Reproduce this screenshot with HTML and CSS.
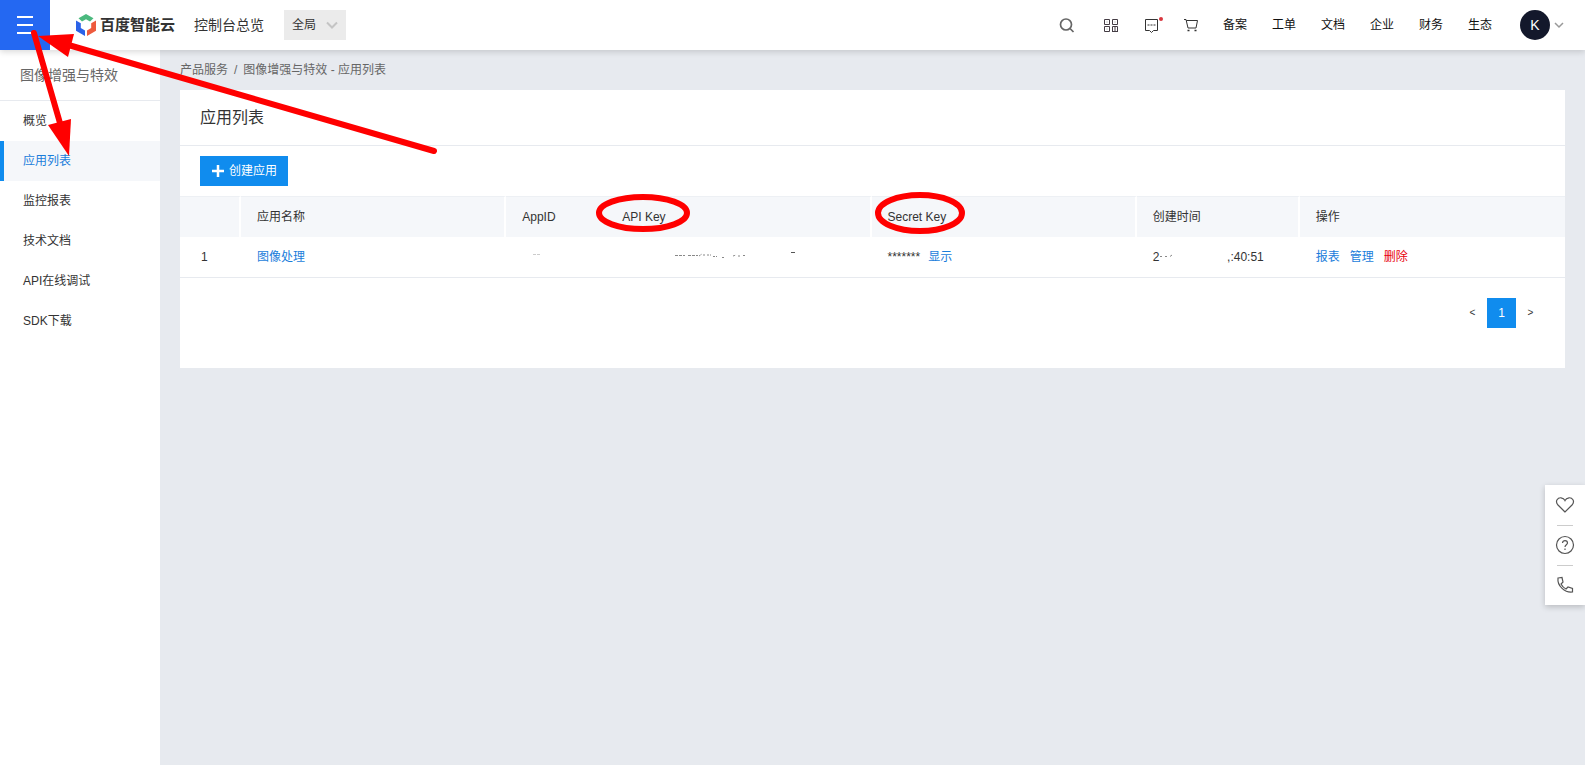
FILE: index.html
```html
<!DOCTYPE html>
<html lang="zh-CN">
<head>
    <meta charset="UTF-8">
    <title>应用列表</title>
    <link rel="stylesheet" href="styles.css">
</head>
<body>
    <header class="header">
        <button class="menu-btn" aria-label="菜单"><span></span><span></span><span></span></button>
        <a href="#" class="logo">
            <svg width="20" height="22" viewBox="0 0 20 22">
                <path d="M10 0L17.500 4.200L14 7.500L10 5.200L6 7.500L2.500 4.200Z" fill="#4bb97e"/>
                <path d="M0 6.500L4.800 9.200V14L9 16.500V22L0 16.800Z" fill="#2b62e8"/>
                <path d="M20 6.500L15.200 9.200V14L11 16.500V22L20 16.800Z" fill="#ee5a3d"/>
            </svg>
            <span>百度智能云</span>
        </a>
        <a href="#" class="console-link">控制台总览</a>
        <button class="region-btn">全局
            <svg width="12" height="8" viewBox="0 0 12 8"><path d="M1 1.500L6 6.500L11 1.500" fill="none" stroke="#c4c4c4" stroke-width="2"/></svg>
        </button>
        <nav class="tools">
            <a href="#" aria-label="搜索" class="search">
                <svg width="16" height="16" viewBox="0 0 16 16" fill="none" stroke="#666" stroke-width="1.700"><circle cx="7" cy="7.500" r="5.500"/><path d="M11 11.500L14.500 15"/></svg>
            </a>
            <a href="#" aria-label="产品">
                <svg width="16" height="16" viewBox="0 0 16 16" fill="none" stroke="#443c44"><path d="M1.500 2.500H6.500V7.500H1.500ZM9.500 2.500H14.500V7.500H9.500ZM1.500 9.500H6.500V14.500H1.500ZM9.500 15V9.500H14.500V15M12 9.500V15M9.500 14.500H14.500"/><path d="M3.500 5H4.500M11.500 5H12.500M3.500 12H4.500" stroke="#999"/></svg>
            </a>
            <a href="#" aria-label="消息" class="message">
                <svg width="16" height="16" viewBox="0 0 16 16" fill="none" stroke="#333"><path d="M2.500 2.500H14.500V13.500H10.500L8.500 15.500L6.500 13.500H2.500Z"/><path d="M4.500 8H6.500M7.500 8H9.500M10.500 8H12.500"/></svg>
            </a>
            <a href="#" aria-label="购物车">
                <svg width="16" height="16" viewBox="0 0 16 16" fill="none" stroke="#333"><path d="M1 2.500H3L5 11H13L14.500 3.500H3.300"/><path d="M4.500 13.500H6.500M11.500 13.500H13.500" stroke-width="1.500"/></svg>
            </a>
        </nav>
        <nav class="links">
            <a href="#">备案</a>
            <a href="#">工单</a>
            <a href="#">文档</a>
            <a href="#">企业</a>
            <a href="#">财务</a>
            <a href="#">生态</a>
        </nav>
        <button class="user">
            <span class="avatar">K</span>
            <svg width="10" height="8" viewBox="0 0 10 8"><path d="M1 2L5 6L9 2" fill="none" stroke="#999" stroke-width="1.500"/></svg>
        </button>
    </header>

    <div class="layout">
        <aside class="sidebar">
            <h2>图像增强与特效</h2>
            <a href="#">概览</a>
            <a href="#" class="active">应用列表</a>
            <a href="#">监控报表</a>
            <a href="#">技术文档</a>
            <a href="#">API在线调试</a>
            <a href="#">SDK下载</a>
        </aside>

        <main class="main">
            <div class="breadcrumb"><a href="#">产品服务</a><span>/</span>图像增强与特效 - 应用列表</div>
            <section class="card">
                <h1>应用列表</h1>
                <div class="toolbar">
                    <button class="create-btn">
                        <svg width="12" height="12" viewBox="0 0 12 12"><path d="M6 0V12M0 6H12" stroke="#fff" stroke-width="2.500"/></svg>
                        创建应用
                    </button>
                </div>
                <table>
                    <colgroup>
                        <col class="col-index">
                        <col>
                        <col class="col-appid">
                        <col>
                        <col>
                        <col class="col-time">
                        <col>
                    </colgroup>
                    <thead>
                        <tr>
                            <th></th>
                            <th>应用名称</th>
                            <th class="joined">AppID</th>
                            <th>API Key</th>
                            <th>Secret Key</th>
                            <th>创建时间</th>
                            <th>操作</th>
                        </tr>
                    </thead>
                    <tbody>
                        <tr>
                            <td>1</td>
                            <td><a href="#">图像处理</a></td>
                            <td><svg class="trace" width="30" height="12" viewBox="0 0 30 12"><path d="M11 3.500H18" stroke="#ccc" stroke-dasharray="3 1"/></svg></td>
                            <td>
                                <svg class="trace" width="190" height="12" viewBox="0 0 190 12" fill="none" stroke="#888">
                                    <path d="M53 4.500H63M66 4.500H76" stroke-dasharray="3 1"/>
                                    <path d="M77 5L80 3M82 3V5M85 4H89M91 5.500H95M100 6.500H103M111 5L114 4M116 5H119M121 4.500H124" stroke-dasharray="2 1"/>
                                    <path d="M169 1.500H173" stroke="#555"/>
                                </svg>
                            </td>
                            <td><span class="mask">*******</span><a href="#">显示</a></td>
                            <td>
                                <div class="time">
                                    <span>2<svg width="14" height="8" viewBox="0 0 14 8"><path d="M1 3.500H3M6 3.500H8M11 3.500L13 2" stroke="#888"/></svg></span>
                                    <span>,:40:51</span>
                                </div>
                            </td>
                            <td class="actions"><a href="#">报表</a><a href="#">管理</a><a href="#" class="delete">删除</a></td>
                        </tr>
                    </tbody>
                </table>
                <div class="pager">
                    <button>&lt;</button>
                    <button class="current">1</button>
                    <button>&gt;</button>
                </div>
            </section>
        </main>
    </div>

    <div class="float-bar">
        <a href="#" aria-label="收藏"><svg width="20" height="20" viewBox="0 0 20 20"><path d="M10 17L3 10C-0.500 6 3 2.500 6 2.800C8 3 9.300 4 10 5.500C10.700 4 12 3 14 2.800C17 2.500 20.500 6 17 10Z"/></svg></a>
        <a href="#" aria-label="帮助"><svg width="20" height="20" viewBox="0 0 20 20"><circle cx="10" cy="10" r="8.500"/><path d="M7.500 8C7.500 4.700 12.500 4.700 12.500 8C12.500 9.800 10 9.700 10 12M10 13.500V15"/></svg></a>
        <a href="#" aria-label="电话"><svg width="20" height="20" viewBox="0 0 20 20"><path d="M3 3L7 2.500L8 7L6 9C7 11 9 13 11 14L13 12L17.500 13.500V17C10 18 2 11 3 3Z"/></svg></a>
    </div>

    <!-- red guide marks -->
    <svg class="marks" width="980" height="240" viewBox="0 0 980 240">
        <g fill="none" stroke="#f00" stroke-width="6" stroke-linecap="round">
            <path d="M434 151L65 44"/>
            <path d="M34 33L62 130"/>
            <ellipse cx="643" cy="213" rx="44" ry="16"/>
            <ellipse cx="920" cy="213" rx="42" ry="18"/>
        </g>
        <path d="M38 36L74 34L68 57Z" fill="#f00"/>
        <path d="M69 156L48 125L71 119Z" fill="#f00"/>
    </svg>
</body>
</html>
```
FILE: styles.css
```css
* {
    box-sizing: border-box;
}
body {
    display: flex;
    flex-direction: column;
    min-height: 100vh;
    margin: 0;
    font-family: "Liberation Sans", "Noto Sans CJK SC", sans-serif;
    font-size: 12px;
    line-height: 20px;
    color: #333;
    background-color: #e7eaef;
}
a {
    color: #1a7ddb;
    text-decoration: none;
}
button {
    border: none;
    padding: 0;
    font: inherit;
    color: inherit;
    background: none;
    cursor: pointer;
}
svg {
    flex: none;
}
.header {
    position: relative;
    display: flex;
    align-items: center;
    height: 50px;
    background-color: #fff;
    box-shadow: 0 2px 6px rgba(0, 0, 0, 0.15);
}
.header a {
    color: #111;
}
.header .logo,
.header .console-link {
    color: #333;
}
.menu-btn {
    display: flex;
    flex-direction: column;
    align-items: center;
    justify-content: center;
    gap: 6px;
    width: 50px;
    height: 50px;
    background-color: #2468f2;
}
.menu-btn span {
    width: 16px;
    height: 2px;
    background-color: #fff;
}
.logo {
    display: flex;
    align-items: center;
    gap: 4px;
    margin-left: 26px;
    font-size: 15px;
    font-weight: bold;
}
.console-link {
    margin-left: 19px;
    font-size: 14px;
}
.region-btn {
    display: flex;
    align-items: center;
    justify-content: space-between;
    width: 62px;
    height: 30px;
    margin-left: 20px;
    padding: 0 8px;
    background-color: #ebebeb;
}
.tools {
    display: flex;
    gap: 24px;
    margin-left: auto;
}
.tools a {
    display: flex;
}
.search {
    margin-right: 4px;
}
.message {
    position: relative;
}
.message::after {
    content: "";
    position: absolute;
    top: 0;
    right: -4px;
    width: 4px;
    height: 4px;
    border-radius: 50%;
    background-color: #d9363e;
}
.links {
    display: flex;
    gap: 25px;
    margin-left: 24px;
}
.user {
    display: flex;
    align-items: center;
    gap: 4px;
    margin: 0 21px 0 28px;
}
.avatar {
    width: 30px;
    height: 30px;
    border-radius: 50%;
    font-size: 14px;
    line-height: 30px;
    color: #fff;
    background-color: #13182b;
}
.layout {
    display: flex;
    flex: 1;
}
.sidebar {
    width: 160px;
    background-color: #fff;
}
.sidebar h2 {
    margin: 0;
    padding-left: 20px;
    border-bottom: 1px solid #e7eaef;
    font-size: 14px;
    font-weight: normal;
    line-height: 50px;
    color: #666;
}
.sidebar a {
    display: block;
    padding-left: 19px;
    border-left: 4px solid transparent;
    line-height: 40px;
    color: #333;
}
.sidebar .active {
    border-left-color: #108cee;
    color: #1a7ddb;
    background-color: #f5f7fa;
}
.main {
    flex: 1;
    padding: 0 20px;
}
.breadcrumb {
    line-height: 40px;
    color: #666;
}
.breadcrumb a {
    color: #666;
}
.breadcrumb span {
    margin: 0 6px;
}
.card {
    padding-bottom: 40px;
    background-color: #fff;
}
.card h1 {
    margin: 0;
    padding-left: 20px;
    border-bottom: 1px solid #e7eaef;
    font-size: 16px;
    font-weight: normal;
    line-height: 55px;
}
.toolbar {
    padding: 10px 20px;
}
.create-btn {
    display: flex;
    align-items: center;
    gap: 5px;
    height: 30px;
    padding: 0 11px 0 12px;
    color: #fff;
    background-color: #108cee;
}
table {
    width: 100%;
    border-spacing: 0;
    table-layout: fixed;
}
.col-index {
    width: 61px;
}
.col-appid {
    width: 100px;
}
.col-time {
    width: 163px;
}
th,
td {
    height: 41px;
    padding: 0 0 0 16px;
    border-bottom: 1px solid #e7eaef;
    text-align: left;
    font-weight: normal;
}
th {
    border-top: 1px solid #edf0f4;
    border-right: 2px solid #fff;
    border-bottom: none;
    background-color: #f5f7fa;
}
th.joined,
th:last-child {
    border-right: none;
}
td:first-child {
    padding-left: 21px;
}
.trace {
    display: block;
}
.mask {
    margin-right: 8px;
}
.time {
    display: flex;
    justify-content: space-between;
    width: 111px;
}
.actions a {
    margin-right: 10px;
}
.actions .delete {
    color: #e8000b;
}
.pager {
    display: flex;
    justify-content: flex-end;
    padding: 20px 20px 0 0;
}
.pager button {
    width: 29px;
    height: 30px;
    font-size: 10px;
}
.pager .current {
    font-size: 12px;
    color: #fff;
    background-color: #108cee;
}
.float-bar {
    position: fixed;
    right: 0;
    bottom: 160px;
    width: 40px;
    background-color: #fff;
    box-shadow: 0 2px 6px rgba(0, 0, 0, 0.2);
}
.float-bar a {
    display: flex;
    align-items: center;
    justify-content: center;
    height: 40px;
}
.float-bar a + a::before {
    content: "";
    position: absolute;
    width: 16px;
    height: 1px;
    margin-bottom: 40px;
    background-color: #ccc;
}
.float-bar svg {
    fill: none;
    stroke: #555;
    stroke-width: 1.2;
}
.marks {
    position: absolute;
    top: 0;
    left: 0;
    pointer-events: none;
}
```
